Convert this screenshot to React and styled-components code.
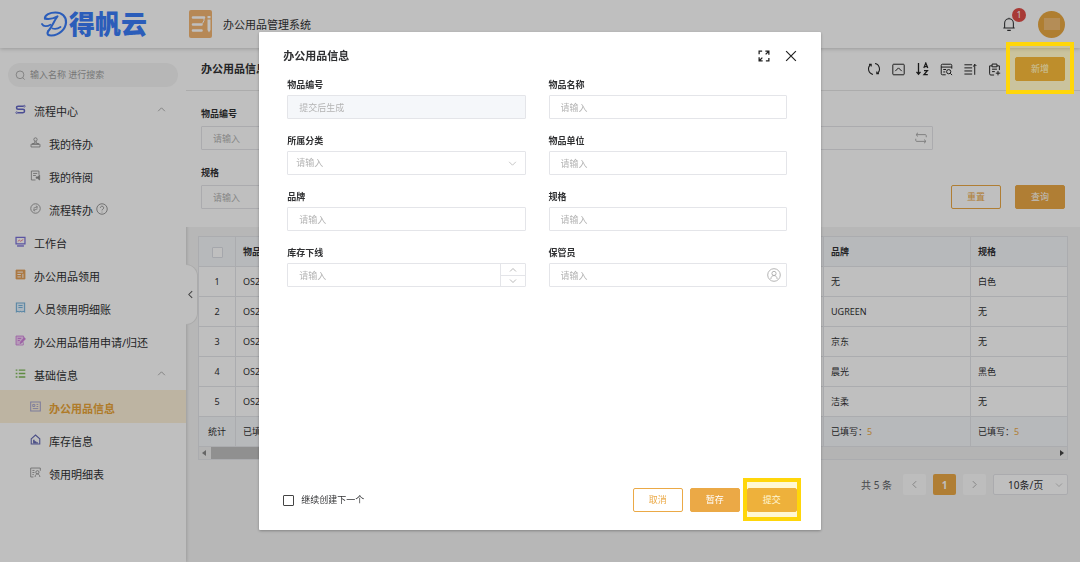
import {useState} from "react";
import styled, {createGlobalStyle, css} from "styled-components";

const GlobalStyle = createGlobalStyle`
  *, *::before, *::after {
    box-sizing: border-box;
  }
  body {
    margin: 0;
    background: #f5f5f5;
    color: #303133;
    font-family: "Noto Sans", "Noto Sans CJK SC", sans-serif;
    font-size: 9px;
    line-height: 12px;
  }
  button, input, select {
    font: inherit;
    color: inherit;
    margin: 0;
  }
  svg {
    display: block;
    flex: none;
  }
`

const iconPaths = {
  process: <><path d="M12 3.200H4.500a2.300 2.300 0 0 0 0 4.600h7a2.400 2.400 0 0 1 0 4.800H4" strokeWidth="2.200"/><circle cx="13.500" cy="3.200" r="1.300"/><circle cx="2.500" cy="12.600" r="1.300"/></>,
  stamp: <><circle cx="8" cy="3.6" r="2.4"/><path d="M7 6v2.6L3 10.2h10L9 8.6V6M1.5 10.5h13v4h-13z"/></>,
  read: <><path d="M13 7V1.5H2v13h6M4.5 5h6M4.5 8h4"/><path d="M9 10h2l3-2.5v7L11 12H9z" fill="currentColor"/></>,
  transfer: <><circle cx="8" cy="8" r="6.9"/><path d="M5 7.500l5.500-2M8.500 4.200l2.300 1.200-1 2.300M11 8.500l-5.500 2M7.500 11.800l-2.300-1.200 1-2.300" strokeWidth="1"/></>,
  help: <><circle cx="8" cy="8" r="7"/><path d="M5.8 6.3a2.2 2.2 0 1 1 3.3 2c-.8.5-1.1.8-1.1 1.6M8 11.6v1"/></>,
  workbench: <><path d="M1.5 2h13v9.5h-13z" strokeWidth="1.8"/><path d="M3 14.5h10" strokeWidth="2"/><path d="M4 8l2.2-2 2 1.6L12 5" stroke="#f06a7a"/></>,
  book: <><path d="M1.5 1.5h13v13h-13z" fill="currentColor"/><path d="M3.500 4.500h8M3.500 8h5M3.500 11.500h5M11.500 7v6" stroke="#fff" strokeWidth="1.4"/></>,
  receipt: <><path d="M2 1.5h12v13l-2-1-2 1-2-1-2 1-2-1-2 1z" fill="#e4f3ff" strokeWidth="1.6"/><path d="M5 5h6M5 8h6" strokeWidth="1.5"/></>,
  apply: <><path d="M12.500 5V1.500h-11v13H6" fill="#f3cdf7"/><path d="M12 10.500v4H6" /><path d="M4 5h5M4 8h3" strokeWidth="1.4"/><path d="M7.500 12.500l.6-2.500 5.400-6 1.700 1.500-5.400 6z" fill="currentColor"/></>,
  list: <path d="M1 3h2.500M1 8h2.500M1 13h2.500M5.500 3H15M5.500 8H15M5.500 13H15" strokeWidth="2"/>,
  card: <><path d="M1 1.5h14v13H1z" strokeWidth="1.5"/><path d="M4 5h3v3H4zM9.5 5H12M9.5 8H12M4 11h8" strokeWidth="1.4"/></>,
  house: <><path d="M1.8 7L8 1.5 14.2 7v7.5H1.8z" strokeWidth="1.6"/><path d="M4.5 13.8V8.5h2.3v2h2.3v1.4h2.4v1.9z" fill="currentColor" stroke="none"/></>,
  detail: <><path d="M5 14.5H1v-13h14v4M3.5 5h3M3.5 8h3M3.5 11h2"/><circle cx="10.8" cy="7.6" r="2.3"/><path d="M7.4 14.5c.2-3 1.6-4.4 3.4-4.4s3.2 1.4 3.6 4.4"/></>,
  search: <><circle cx="7.3" cy="7" r="5.6"/><path d="M11.2 11l2.8 3"/></>,
  up: <path d="M2 11l6-6 6 6"/>,
  down: <path d="M2 5l6 6 6-6"/>,
  left: <path d="M11 2L5 8l6 6"/>,
  right: <path d="M5 2l6 6-6 6"/>,
  bell: <><path d="M1.5 12.5h13M3 12.5V7a5 5 0 0 1 10 0v5.5M8 2V.8M6 15.3h4"/></>,
  refresh: <><path d="M6.800 14.200A6.300 6.300 0 0 1 4.400 2.900M9.200 1.800a6.300 6.300 0 0 1 2.400 11.300"/><path d="M2.400 2.700h2.400v2.400M13.600 13.300h-2.400v-2.400"/></>,
  collapse: <><rect x="1" y="1.5" width="14" height="13" rx="1"/><path d="M4 10l4-4 4 4"/></>,
  columns: <><path d="M7 14.5H3a1.5 1.5 0 0 1-1.5-1.5V3A1.5 1.5 0 0 1 3 1.5h10A1.5 1.5 0 0 1 14.5 3v4M1.5 5h13M4 8h3.5M4 11h2.5"/><circle cx="10.7" cy="10.7" r="2.6"/><path d="M12.7 12.7l2.2 2.2"/></>,
  height: <path d="M.5 2.2h9.5M.5 6h9.5M.5 9.8h9.5M.5 13.6h9.5M13.2 14.5V2M11.6 4.4l1.6-2.9 2 2.2"/>,
  paste: <><path d="M7.5 14.8H3.5A1.5 1.5 0 0 1 2 13.3V3.5h3M11 3.5h3v5.2M5 1.3h6v3.4H5zM5 7.6h6M5 10.6h3.4"/><path d="M12.3 9.8v5.4M9.6 12.5H15"/></>,
  swap: <path d="M15 7V4.800a1.300 1.300 0 0 0-1.300-1.300H1.500M4 1L1.300 3.500 4 6M1 9v2.200a1.300 1.300 0 0 0 1.300 1.300h12.200M12 10l2.700 2.500L12 15"/>,
  person: <><circle cx="8" cy="8" r="7.2"/><circle cx="8" cy="6.2" r="2.4"/><path d="M4.4 12.6c.2-2.6 1.6-4 3.6-4s3.4 1.4 3.6 4"/></>,
  fullscreen: <path d="M1.5 5.5V1.5h4M9.8 1.5h4.7v4.7M14 2l-3.8 3.8M6.2 14.5H1.5V9.8M2 14l3.8-3.8M10.5 14.5h4v-4" strokeWidth="1.7"/>,
  close: <path d="M1.5 1.5l13 13M14.5 1.5l-13 13" strokeWidth="1.6"/>,
}

const Icon = ({name, size = 12, color = "currentColor", weight = 1.2}) => (
  <svg width={size} height={size} viewBox="0 0 16 16" fill="none" stroke="currentColor"
       strokeWidth={weight} color={color} aria-hidden="true">
    {iconPaths[name]}
  </svg>
)

const SortIcon = () => (
  <svg width="13" height="14" viewBox="0 0 13 14" fill="none" stroke="currentColor" aria-hidden="true">
    <path d="M2.5 1v11M.5 9.8l2 2.4 2-2.4" strokeWidth="1.3"/>
    <path d="M7.8 6L9.8 1l2 5M8.400 4.600h2.800" strokeWidth="1.2"/>
    <path d="M8 8.700h3.400L8 12.700h3.800" strokeWidth="1.3"/>
  </svg>
)

const LogoMark = () => (
  <svg width="27" height="26" viewBox="0 0 27 26" fill="none" stroke="currentColor" strokeLinecap="round" strokeLinejoin="round" aria-hidden="true">
    <path d="M4 7.500C3.500 3.800 9 1.500 14.500 1.500 21 1.500 25.300 5.500 25 11.500 24.500 18.500 18 24.300 10.500 24.500 7 24.600 5.500 23 7 20.500" strokeWidth="2.200"/>
    <path d="M4 7.500c3 1 8 .3 12.500-2.200-3.500 4.200-5 10-9.500 15.200" strokeWidth="2"/>
    <path d="M1 13c1.500 2.800 5 2.800 8.500.8M11.500 17.500c3 .8 5.500.3 8-1.500" strokeWidth="1.800"/>
  </svg>
)

const AppMark = () => (
  <svg width="23" height="28" viewBox="0 0 23 28" aria-hidden="true">
    <rect width="23" height="28" rx="2" fill="#f3b673"/>
    <path d="M4 7.500h11M4 14.500h8.500M4 20.500h8.500" stroke="#fff" strokeWidth="2.600" strokeLinecap="round"/>
    <path d="M15 8v2.500l-1.500 3" stroke="#fff" strokeWidth="1" fill="none"/>
    <path d="M18.500 9.500h3v10.500l-1.500 2.500-1.500-2.500zM18.500 6h3v2.300h-3z" fill="#fff"/>
  </svg>
)

const menus = [
  {name: "流程中心", icon: "process", color: "#6366c4", open: true},
  {name: "我的待办", icon: "stamp", color: "#8c8c8c", sub: true},
  {name: "我的待阅", icon: "read", color: "#8c8c8c", sub: true},
  {name: "流程转办", icon: "transfer", color: "#8c8c8c", sub: true, help: true},
  {name: "工作台", icon: "workbench", color: "#7a70d8"},
  {name: "办公用品领用", icon: "book", color: "#e5a058"},
  {name: "人员领用明细账", icon: "receipt", color: "#78b4dc"},
  {name: "办公用品借用申请/归还", icon: "apply", color: "#d07fdc"},
  {name: "基础信息", icon: "list", color: "#7fba58", open: true},
  {name: "办公用品信息", icon: "card", color: "#a5a5cf", sub: true, active: true},
  {name: "库存信息", icon: "house", color: "#666bb5", sub: true},
  {name: "领用明细表", icon: "detail", color: "#8c8c8c", sub: true},
]

const columns = [
  {name: "物品编号", width: 196},
  {name: "物品名称", width: 196},
  {name: "所属分类", width: 196},
  {name: "品牌", width: 147},
  {name: "规格", width: 147},
]
const rows = [
  ["OS2023001", "", "", "无", "白色"],
  ["OS2023002", "", "", "UGREEN", "无"],
  ["OS2023003", "", "", "京东", "无"],
  ["OS2023004", "", "", "晨光", "黑色"],
  ["OS2023005", "", "", "洁柔", "无"],
]

const TextField = ({id, label, placeholder = "请输入", disabled, icon}) => (
  <Field>
    <Label htmlFor={id}>{label}</Label>
    <Control>
      <TextInput id={id} placeholder={placeholder} disabled={disabled}/>
      {icon && <Suffix>{icon}</Suffix>}
    </Control>
  </Field>
)

const App = () => {
  const [isOpen, setIsOpen] = useState(true);
  const [keepCreate, setKeepCreate] = useState(false);

  const closeModal = () => {
    setIsOpen(false)
  }

  return (
    <>
      <GlobalStyle/>
      <Page>
        <Header>
          <Logo href="#"><LogoMark/>得帆云</Logo>
          <AppMark/>
          <AppName>办公用品管理系统</AppName>
          <BellButton aria-label="通知">
            <Icon name="bell" size={14}/>
            <Badge>1</Badge>
          </BellButton>
          <Avatar/>
        </Header>
        <Body>
          <Sidebar>
            <SearchBox>
              <Icon name="search" size={11} color="#a0a0a0"/>
              <SearchInput aria-label="搜索" placeholder="输入名称 进行搜索"/>
            </SearchBox>
            <nav>
              {menus.map((menu) => (
                <MenuItem key={menu.name} href="#" $sub={menu.sub} $active={menu.active}>
                  <Icon name={menu.icon} size={11} color={menu.color}/>
                  <MenuName>{menu.name}</MenuName>
                  {menu.help && <Icon name="help" size={12} color="#777" weight={1}/>}
                  {menu.open && <MenuArrow><Icon name="up" size={9} color="#888"/></MenuArrow>}
                </MenuItem>
              ))}
            </nav>
          </Sidebar>
          <Main>
            <Fold aria-label="收起菜单"><Icon name="left" size={9} weight={1.8}/></Fold>
            <Toolbar>
              <PageTitle>办公用品信息</PageTitle>
              <Tools>
                <Tool aria-label="刷新"><Icon name="refresh" size={14}/></Tool>
                <Tool aria-label="收起"><Icon name="collapse" size={13}/></Tool>
                <Tool aria-label="排序"><SortIcon/></Tool>
                <Tool aria-label="列设置"><Icon name="columns" size={13}/></Tool>
                <Tool aria-label="行高"><Icon name="height" size={13}/></Tool>
                <Tool aria-label="导入"><Icon name="paste" size={13}/></Tool>
              </Tools>
              <Marked>
                <Btn $primary onClick={() => setIsOpen(true)}>新增</Btn>
                <Mark $inset="-15px -9px -13px"/>
              </Marked>
            </Toolbar>
            <Filters>
              <FilterGrid>
                <TextField id="filter-no" label="物品编号"/>
                <TextField id="filter-name" label="物品名称" icon={<Icon name="swap" weight={1.3}/>}/>
                <TextField id="filter-spec" label="规格"/>
              </FilterGrid>
              <Btn>重置</Btn>
              <Btn $primary>查询</Btn>
            </Filters>
            <TableBox>
              <TableScroll>
                <Table>
                  <colgroup>
                    <col width="37"/>
                    {columns.map((column) => <col key={column.name} width={column.width}/>)}
                  </colgroup>
                  <thead>
                    <tr>
                      <th><Check type="checkbox" aria-label="全选" $light/></th>
                      {columns.map((column) => <th key={column.name}>{column.name}</th>)}
                    </tr>
                  </thead>
                  <tbody>
                    {rows.map((row, index) => (
                      <tr key={row[0]}>
                        <td>{index + 1}</td>
                        {row.map((cell, i) => <td key={columns[i].name}>{cell}</td>)}
                      </tr>
                    ))}
                  </tbody>
                  <tfoot>
                    <tr>
                      <td>统计</td>
                      {columns.map((column) => <td key={column.name}>已填写：<Num>5</Num></td>)}
                    </tr>
                  </tfoot>
                </Table>
              </TableScroll>
              <ScrollBar>
                <svg width="4" height="6" viewBox="0 0 4 6"><path d="M4 0v6L0 3z" fill="#888"/></svg>
                <Thumb/>
                <svg width="4" height="6" viewBox="0 0 4 6"><path d="M0 0v6l4-3z" fill="#444"/></svg>
              </ScrollBar>
            </TableBox>
            <Paging>
              <Total>共 5 条</Total>
              <PageBtn aria-label="上一页"><Icon name="left" size={9} weight={1.6}/></PageBtn>
              <PageBtn $active>1</PageBtn>
              <PageBtn aria-label="下一页"><Icon name="right" size={9} weight={1.6}/></PageBtn>
              <PageSize>
                <PageSelect aria-label="每页条数"><option>10条/页</option></PageSelect>
                <Suffix $edge={5}><Icon name="down" size={8}/></Suffix>
              </PageSize>
            </Paging>
          </Main>
        </Body>
      </Page>
      {
        isOpen && (
          <Mask>
            <Modal role="dialog" aria-label="办公用品信息">
              <ModalHead>
                <ModalTitle>办公用品信息</ModalTitle>
                <Tool aria-label="全屏"><Icon name="fullscreen"/></Tool>
                <Tool aria-label="关闭" onClick={closeModal}><Icon name="close"/></Tool>
              </ModalHead>
              <FormGrid>
                <TextField id="no" label="物品编号" placeholder="提交后生成" disabled/>
                <TextField id="name" label="物品名称"/>
                <Field>
                  <Label htmlFor="type">所属分类</Label>
                  <Control>
                    <Select id="type"><option>请输入</option></Select>
                    <Suffix $edge={9}><Icon name="down" size={9}/></Suffix>
                  </Control>
                </Field>
                <TextField id="unit" label="物品单位"/>
                <TextField id="brand" label="品牌"/>
                <TextField id="spec" label="规格"/>
                <Field>
                  <Label htmlFor="stock">库存下线</Label>
                  <Control>
                    <TextInput id="stock" placeholder="请输入"/>
                    <Stepper>
                      <StepBtn aria-label="增加"><Icon name="up" size={8}/></StepBtn>
                      <StepBtn aria-label="减少"><Icon name="down" size={8}/></StepBtn>
                    </Stepper>
                  </Control>
                </Field>
                <TextField id="keeper" label="保管员" icon={<Icon name="person" size={14} weight={1}/>}/>
              </FormGrid>
              <ModalFoot>
                <CheckLabel>
                  <Check type="checkbox" checked={keepCreate} onChange={() => setKeepCreate(!keepCreate)}/>
                  继续创建下一个
                </CheckLabel>
                <Btn onClick={closeModal}>取消</Btn>
                <Btn $primary>暂存</Btn>
                <Marked>
                  <Btn $primary>提交</Btn>
                  <Mark $inset="-10px -4px -9px"/>
                </Marked>
              </ModalFoot>
            </Modal>
          </Mask>
        )
      }
    </>
  )
}


export default App


const Page = styled.div`
  min-height: 100vh;
  display: flex;
  flex-direction: column;
`
const Header = styled.header`
  position: relative;
  z-index: 1;
  display: flex;
  align-items: center;
  height: 48px;
  padding: 0 15px 0 41px;
  background: #fff;
  box-shadow: 0 1px 4px rgba(0,0,0,.2);
`
const Logo = styled.a`
  display: flex;
  align-items: center;
  gap: 1px;
  width: 148px;
  color: #3a7df8;
  font-size: 26px;
  font-weight: 900;
  line-height: 28px;
  text-decoration: none;
`
const AppName = styled.span`
  flex: 1;
  padding-top: 2px;
  margin-left: 11px;
  font-size: 11px;
  line-height: 16px;
`
const BellButton = styled.button`
  position: relative;
  padding: 0;
  border: 0;
  background: none;
`
const Badge = styled.span`
  position: absolute;
  top: -9px;
  right: -10px;
  width: 14px;
  border-radius: 7px;
  background: #e14e49;
  color: #fff;
  font-size: 9px;
  line-height: 14px;
  text-align: center;
`
const Avatar = styled.div`
  width: 27px;
  height: 27px;
  margin-left: 22px;
  border-radius: 50%;
  background: linear-gradient(#f0bd75, #f0bd75) center / 16px 12px no-repeat #eaa942;
`
const Body = styled.div`
  flex: 1;
  display: flex;
`
const Sidebar = styled.aside`
  flex: none;
  width: 186px;
  padding-top: 15px;
  background: #fff;
  box-shadow: 1px 0 3px rgba(0,0,0,.15);
`
const SearchBox = styled.div`
  display: flex;
  align-items: center;
  gap: 4px;
  height: 24px;
  margin: 0 8px 6px;
  padding: 0 7px;
  border-radius: 12px;
  background: #f5f5f5;
`
const SearchInput = styled.input`
  flex: 1;
  min-width: 0;
  padding: 0;
  border: 0;
  background: none;
  outline: none;

  &::placeholder {
    color: #a0a0a0;
  }
`
const MenuItem = styled.a`
  display: flex;
  align-items: center;
  height: 33px;
  padding: 0 20px 0 ${(props) => props.$sub ? "30px" : "15px"};
  color: #303133;
  font-size: 11px;
  line-height: 16px;
  text-decoration: none;

  ${(props) => props.$active && css`
    background: #fdf0d9;
    color: #eaa536;
    font-weight: 700;
  `}
`
const MenuName = styled.span`
  margin: 4px 3px 0 8px;
`
const MenuArrow = styled.span`
  margin-left: auto;
`
const Main = styled.main`
  position: relative;
  flex: 1;
  min-width: 0;
`
const Fold = styled.button`
  position: absolute;
  top: 216px;
  left: 0;
  width: 12px;
  height: 61px;
  padding: 0;
  border: 1px solid #e4e4e4;
  border-left: 0;
  border-radius: 0 12px 12px 0;
  background: #fff;
  color: #555;
`
const Toolbar = styled.div`
  display: flex;
  align-items: center;
  height: 43px;
  padding: 0 15px;
  border-bottom: 1px solid #e6e6e6;
  background: #fff;
`
const PageTitle = styled.h1`
  flex: 1;
  margin: 0;
  font-size: 11px;
  line-height: 16px;
`
const Tools = styled.div`
  display: flex;
  gap: 10px;
  margin-right: 14px;
`
const Tool = styled.button`
  display: flex;
  align-items: center;
  justify-content: center;
  width: 14px;
  height: 14px;
  padding: 0;
  border: 0;
  background: none;
  color: #222;
`
const Marked = styled.div`
  position: relative;
`
const Mark = styled.span`
  position: absolute;
  inset: ${(props) => props.$inset};
  z-index: 20;
  border: 4px solid #ffd60a;
  background: rgba(255,214,10,.18);
  pointer-events: none;
`
const Btn = styled.button`
  display: block;
  width: 50px;
  height: 24px;
  padding: 0;
  border: 1px solid #eba946;
  border-radius: 2px;
  background: ${(props) => props.$primary ? "#eba946" : "#fff"};
  color: ${(props) => props.$primary ? "#fff" : "#eba946"};
  line-height: 12px;
`
const Filters = styled.div`
  display: flex;
  align-items: flex-end;
  gap: 14px;
  padding: 16px 15px 18px;
  background: #fff;
`
const Field = styled.div`
  display: flex;
  flex-direction: column;
  gap: 3px;
  min-width: 0;
`
const Label = styled.label`
  font-weight: 700;
  line-height: 14px;
`
const FilterGrid = styled.div`
  flex: 1;
  display: grid;
  grid-template-columns: 1fr 1fr;
  gap: 16px 22px;
  margin-right: 4px;

  ${Field} {
    gap: 5px;
  }
`
const Control = styled.div`
  position: relative;
`
const inputStyle = css`
  display: block;
  width: 100%;
  height: 24px;
  border: 1px solid #e4e5e9;
  border-radius: 1px;
  background: #fff;
  outline: none;
`
const TextInput = styled.input`
  ${inputStyle}
  padding: 0 11px;

  &::placeholder {
    color: #b4b4b4;
  }
  &:disabled {
    background: #f5f7fa;
  }
`
const Select = styled.select`
  ${inputStyle}
  appearance: none;
  padding: 0 8px;
  color: #b4b4b4;
`
const Suffix = styled.span`
  position: absolute;
  top: 0;
  bottom: 0;
  right: ${(props) => props.$edge ?? 6}px;
  display: flex;
  align-items: center;
  color: #aaa;
  pointer-events: none;
`
const Stepper = styled.div`
  position: absolute;
  inset: 1px 1px 1px auto;
  display: grid;
  grid-template-rows: 1fr 1fr;
  width: 25px;
  border-left: 1px solid #e4e5e9;
`
const StepBtn = styled.button`
  display: flex;
  align-items: center;
  justify-content: center;
  padding: 0;
  border: 0;
  background: none;
  color: #888;

  & + & {
    border-top: 1px solid #e4e5e9;
  }
`
const TableBox = styled.div`
  margin: 9px 12px 0;
  border: 1px solid #e4e6ea;
`
const TableScroll = styled.div`
  overflow: hidden;
`
const Table = styled.table`
  width: 919px;
  table-layout: fixed;
  border-collapse: separate;
  border-spacing: 0;

  th, td {
    height: 30px;
    padding: 0 7px;
    border-right: 1px solid #e4e6ea;
    border-bottom: 1px solid #e4e6ea;
    background: #fff;
    text-align: left;
    white-space: nowrap;
  }
  th:first-child, td:first-child {
    padding: 0;
    text-align: center;
  }
  th, tfoot td {
    background: #f5f7fa;
  }
`
const Num = styled.span`
  color: #eba946;
`
const Check = styled.input`
  appearance: none;
  display: inline-block;
  flex: none;
  width: 11px;
  height: 11px;
  border: 1px solid ${(props) => props.$light ? "#dcdfe6" : "#444"};
  border-radius: 1px;
  background: #fff;
  vertical-align: middle;

  &:checked {
    background: #eba946;
  }
`
const ScrollBar = styled.div`
  display: flex;
  align-items: center;
  height: 12px;
  padding: 0 3px;
  background: #f1f1f1;
`
const Thumb = styled.div`
  width: 70%;
  height: 12px;
  margin: 0 auto 0 5px;
  background: #c1c1c1;
`
const Paging = styled.div`
  display: flex;
  align-items: center;
  justify-content: flex-end;
  gap: 7px;
  padding: 14px 12px;
  font-size: 10px;
`
const Total = styled.span`
  margin-right: 4px;
  color: #606266;
`
const PageBtn = styled.button`
  display: flex;
  align-items: center;
  justify-content: center;
  width: 23px;
  height: 21px;
  padding: 0;
  border: 0;
  border-radius: 2px;
  background: ${(props) => props.$active ? "#eba946" : "#fcfcfc"};
  color: ${(props) => props.$active ? "#fff" : "#aaa"};
  font-weight: 700;
`
const PageSize = styled.div`
  position: relative;
  width: 75px;
`
const PageSelect = styled.select`
  ${inputStyle}
  appearance: none;
  height: 21px;
  padding: 0 14px;
  border-radius: 2px;
`
const Mask = styled.div`
  position: fixed;
  inset: 0;
  z-index: 10;
  display: flex;
  justify-content: center;
  padding: 32px;
  background: rgba(0,0,0,.25);
`
const Modal = styled.section`
  display: flex;
  flex-direction: column;
  width: 52vw;
  border-radius: 1px;
  background: #fff;
  box-shadow: 0 1px 3px rgba(0,0,0,.3);
`
const ModalHead = styled.div`
  display: flex;
  align-items: center;
  gap: 13px;
  padding: 16px 23px 6px 24px;
`
const ModalTitle = styled.h2`
  flex: 1;
  margin: 0;
  font-size: 11px;
  line-height: 16px;
`
const FormGrid = styled.div`
  flex: 1;
  display: grid;
  grid-template-columns: 1fr 1fr;
  align-content: start;
  gap: 15px 23px;
  padding: 8px 34px 0 28px;
`
const ModalFoot = styled.div`
  display: flex;
  align-items: center;
  gap: 7px;
  padding: 18px 24px;
`
const CheckLabel = styled.label`
  flex: 1;
  display: flex;
  align-items: center;
  gap: 7px;
`
